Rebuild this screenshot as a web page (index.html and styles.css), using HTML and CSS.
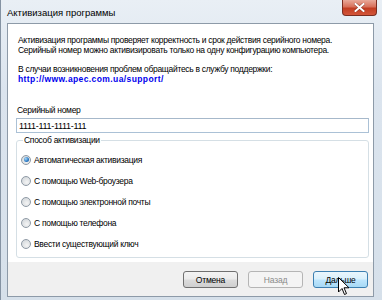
FILE: index.html
```html
<!DOCTYPE html>
<html lang="ru">
<head>
    <meta charset="UTF-8">
    <meta name="viewport" content="width=device-width, initial-scale=1.0">
    <title>Активизация программы</title>
    <link rel="stylesheet" href="styles.css">
</head>
<body>
    <div class="window">
        <div class="titlebar">
            <span class="title">Активизация программы</span>
            <button class="close" type="button">
                <svg width="11" height="9" viewBox="0 0 11 9">
                    <path d="M1.5 1 L9.5 8 M9.5 1 L1.5 8" stroke="#5a1a10" stroke-width="3" stroke-linecap="square" opacity="0.5"/>
                    <path d="M1.5 1 L9.5 8 M9.5 1 L1.5 8" stroke="#ffffff" stroke-width="2" stroke-linecap="square"/>
                </svg>
            </button>
        </div>

        <div class="client">
            <div class="content">
                <p class="info">Активизация программы проверяет корректность и срок действия серийного номера.<br>Серийный номер можно активизировать только на одну конфигурацию компьютера.</p>
                <p class="info">В случаи возникновения проблем обращайтесь в службу поддержки:<br><a class="link" href="#">http://www.apec.com.ua/support/</a></p>

                <label class="field-label" for="serial">Серийный номер</label>
                <input id="serial" class="serial" type="text" value="1111-111-1111-111">

                <fieldset class="group">
                    <legend>Способ активизации</legend>
                    <div class="options">
                        <label class="option"><span class="radio checked"></span>Автоматическая активизация</label>
                        <label class="option"><span class="radio"></span>С помощью Web-броузера</label>
                        <label class="option"><span class="radio"></span>С помощью электронной почты</label>
                        <label class="option"><span class="radio"></span>С помощью телефона</label>
                        <label class="option"><span class="radio"></span>Ввести существующий ключ</label>
                    </div>
                </fieldset>
            </div>

            <div class="footer">
                <button class="btn" type="button">Отмена</button>
                <button class="btn btn-disabled" type="button">Назад</button>
                <button class="btn btn-default" type="button">Дальше</button>
            </div>
        </div>

        <svg class="cursor" width="12" height="19" viewBox="0 0 12 19">
            <path d="M0.5 0.5 L0.5 15 L4 11.5 L6.5 17.5 L8.5 16.6 L6 10.8 L11 10.8 Z" fill="#ffffff" stroke="#000000" stroke-width="1" stroke-linejoin="round"/>
        </svg>
    </div>
</body>
</html>
```

FILE: styles.css
```css
* {
    margin: 0;
    padding: 0;
    box-sizing: border-box;
    font-family: "Liberation Sans", Arial, sans-serif;
}

body {
    background-color: #dbe4ee;
    width: 382px;
    height: 300px;
    overflow: hidden;
}

.window {
    position: relative;
    width: 382px;
    height: 300px;
    background: linear-gradient(to bottom, #e9eff5 0%, #dbe4ee 30%, #d6e0ea 100%);
    border-left: 1px solid #8593a3;
}

.titlebar {
    display: flex;
    justify-content: space-between;
    align-items: flex-start;
    height: 23px;
}

.title {
    font-size: 9.5px;
    color: #000000;
    padding: 7px 0 0 6px;
}

.close {
    width: 35px;
    height: 16px;
    margin-right: 5px;
    border: 1px solid #7a2d20;
    border-top: none;
    border-radius: 0 0 4px 4px;
    background: linear-gradient(to bottom, #e9a999 0%, #d8705a 45%, #c23d22 55%, #d3563a 100%);
    display: flex;
    align-items: center;
    justify-content: center;
}

.client {
    margin: 0 8px 0 6px;
    border: 1px solid #8d9aa8;
    background-color: #f0f0f0;
}

.content {
    background-color: #ffffff;
    padding: 11px 4px 4px 8px;
    font-size: 8.5px;
    letter-spacing: -0.3px;
}

.info {
    line-height: 10px;
    color: #000000;
    margin-left: 2px;
    margin-bottom: 9px;
    white-space: nowrap;
}

.link {
    color: #0000ee;
    font-weight: bold;
    text-decoration: none;
    letter-spacing: 0.4px;
}

.field-label {
    display: block;
    line-height: 12px;
    margin-top: 20px;
    margin-left: 1px;
}

.serial {
    display: block;
    width: 100%;
    height: 15px;
    margin-top: 2px;
    padding: 0 2px;
    border: 1px solid #abc1d6;
    border-top-color: #a6b8ca;
    font-size: 9px;
    letter-spacing: -0.3px;
    color: #000000;
    outline: none;
}

.group {
    margin-top: 1px;
    border: 1px solid #d5dfe5;
    border-radius: 3px;
    padding: 0 4px 3px 4px;
}

.group legend {
    line-height: 12px;
    padding: 0 1px;
    margin-left: 2px;
    color: #000000;
}

.options {
    padding-top: 3px;
}

.option {
    display: flex;
    align-items: center;
    height: 21px;
    color: #000000;
    white-space: nowrap;
}

.radio {
    width: 10px;
    height: 10px;
    margin-right: 3px;
    border: 1px solid #8f9aa5;
    border-radius: 50%;
    background: radial-gradient(circle at 60% 65%, #f4f4f4 0%, #d8dcdf 70%, #c4c9ce 100%);
    display: flex;
    align-items: center;
    justify-content: center;
}

.radio.checked::after {
    content: "";
    width: 5px;
    height: 5px;
    border-radius: 50%;
    background: radial-gradient(circle at 35% 35%, #a8d8f8 0%, #2a79c4 60%, #134f8f 100%);
}

.footer {
    display: flex;
    justify-content: flex-end;
    gap: 10px;
    height: 34px;
    padding: 9px 5px 0 0;
}

.btn {
    width: 55px;
    height: 17px;
    border: 1px solid #707070;
    border-radius: 3px;
    background: linear-gradient(to bottom, #f3f3f3 0%, #ebebeb 48%, #dcdcdc 52%, #cfcfcf 100%);
    font-size: 8.5px;
    letter-spacing: -0.2px;
    color: #000000;
}

.btn-disabled {
    border-color: #b5b5b5;
    background: #f4f4f4;
    color: #8a8a8a;
}

.btn-default {
    border-color: #3c7fb1;
    background: linear-gradient(to bottom, #eaf6fd 0%, #d9f0fc 48%, #bee6fd 52%, #a7d9f5 100%);
}

.cursor {
    position: absolute;
    left: 337px;
    top: 277px;
}
```
